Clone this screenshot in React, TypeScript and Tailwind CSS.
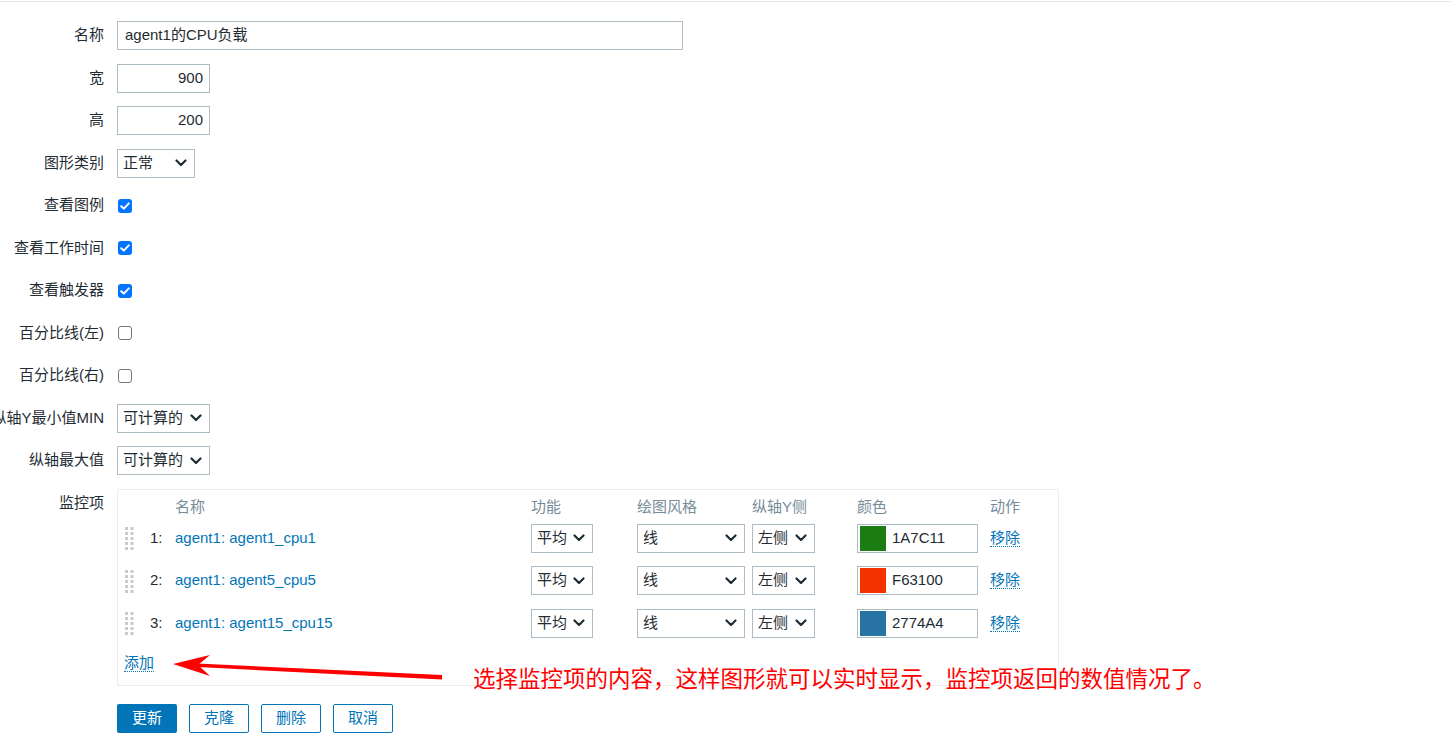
import React from 'react';

const font = { fontFamily: '"Liberation Sans", Arial, "Noto Sans CJK SC", sans-serif' };

const Chevron: React.FC = () => (
  <svg width="12" height="8" viewBox="0 0 12 8" className="shrink-0">
    <path d="M1.5 1.5 L6 6 L10.5 1.5" fill="none" stroke="#1f2c33" strokeWidth="2.2" strokeLinecap="round" strokeLinejoin="round" />
  </svg>
);

const Select: React.FC<{ value: string; w: string }> = ({ value, w }) => (
  <div className={`${w} h-[29px] border border-[#acbbc4] bg-white flex items-center justify-between pl-[5px] pr-[7px] text-[#1f2c33]`}>
    <span className="whitespace-nowrap">{value}</span>
    <Chevron />
  </div>
);

const Checkbox: React.FC<{ checked?: boolean }> = ({ checked }) =>
  checked ? (
    <div className="w-[14px] h-[14px] ml-px rounded-[3px] bg-[#0075ff] flex items-center justify-center">
      <svg width="10" height="8" viewBox="0 0 10 8">
        <path d="M1.2 4.2 L3.8 6.6 L8.8 1.4" fill="none" stroke="white" strokeWidth="2" strokeLinecap="round" strokeLinejoin="round" />
      </svg>
    </div>
  ) : (
    <div className="w-[14px] h-[14px] ml-px rounded-[3px] border border-[#767676] bg-white" />
  );

const Row: React.FC<{ label: string; top?: boolean; children: React.ReactNode }> = ({ label, top, children }) => (
  <div className={`flex ${top ? 'items-start' : 'items-center'}`}>
    <div className="w-[104px] shrink-0 h-[29px] flex items-center justify-end">
      <span className="whitespace-nowrap shrink-0 text-[#1f2c33]">{label}</span>
    </div>
    <div className="ml-[13px] min-h-[29px] flex items-center">{children}</div>
  </div>
);

const DragHandle: React.FC = () => (
  <svg width="9" height="23" viewBox="0 0 9 23">
    {[0, 5, 10, 15, 20].map((y) => (
      <g key={y} fill="#c4ccd1">
        <rect x="0" y={y} width="3" height="3" />
        <rect x="5.5" y={y} width="3" height="3" />
      </g>
    ))}
  </svg>
);

const items = [
  { n: 1, name: 'agent1: agent1_cpu1', color: '#1A7C11', hex: '1A7C11' },
  { n: 2, name: 'agent1: agent5_cpu5', color: '#F63100', hex: 'F63100' },
  { n: 3, name: 'agent1: agent15_cpu15', color: '#2774A4', hex: '2774A4' },
];

const cols = 'grid grid-cols-[26px_25px_356px_106px_115px_105px_133px_1fr]';

const App: React.FC = () => {
  return (
    <div className="relative w-[1452px] h-[741px] overflow-hidden bg-white text-[15px]" style={font}>
      <div className="pt-px">
        <div className="border-t border-[#e6e6e6] w-[1451px]" />
      </div>

      {/* Form */}
      <div className="pt-[19px] flex flex-col gap-[13.5px]">
        <Row label="名称">
          <div className="w-[566px] h-[29px] border border-[#acbbc4] flex items-center pl-[7px] text-[#1f2c33]">agent1的CPU负载</div>
        </Row>
        <Row label="宽">
          <div className="w-[93px] h-[29px] border border-[#acbbc4] flex items-center justify-end pr-[6px] text-[#1f2c33]">900</div>
        </Row>
        <Row label="高">
          <div className="w-[93px] h-[29px] border border-[#acbbc4] flex items-center justify-end pr-[6px] text-[#1f2c33]">200</div>
        </Row>
        <Row label="图形类别">
          <Select value="正常" w="w-[78px]" />
        </Row>
        <Row label="查看图例">
          <Checkbox checked />
        </Row>
        <Row label="查看工作时间">
          <Checkbox checked />
        </Row>
        <Row label="查看触发器">
          <Checkbox checked />
        </Row>
        <Row label="百分比线(左)">
          <Checkbox />
        </Row>
        <Row label="百分比线(右)">
          <Checkbox />
        </Row>
        <Row label="纵轴Y最小值MIN">
          <Select value="可计算的" w="w-[93px]" />
        </Row>
        <Row label="纵轴最大值">
          <Select value="可计算的" w="w-[93px]" />
        </Row>
        <Row label="监控项" top>
          <div className="w-[942px] h-[197px] border border-[#ebeef0] pl-[6px] pt-[6px]">
            <div className={`${cols} h-[18px] items-center text-[#768d99]`}>
              <div />
              <div />
              <div>名称</div>
              <div>功能</div>
              <div>绘图风格</div>
              <div>纵轴Y侧</div>
              <div>颜色</div>
              <div>动作</div>
            </div>
            <div className="mt-[10px] flex flex-col gap-[13.5px]">
              {items.map((it) => (
                <div key={it.n} className={`${cols} h-[29px] items-center`}>
                  <div className="pl-px pt-px">
                    <DragHandle />
                  </div>
                  <div className="text-[#1f2c33]">{it.n}:</div>
                  <div className="text-[#0275b8] whitespace-nowrap">{it.name}</div>
                  <div>
                    <Select value="平均" w="w-[62px]" />
                  </div>
                  <div>
                    <Select value="线" w="w-[108px]" />
                  </div>
                  <div>
                    <Select value="左侧" w="w-[63px]" />
                  </div>
                  <div>
                    <div className="w-[121px] h-[29px] border border-[#acbbc4] flex items-center pl-[2px]">
                      <div className="w-[26px] h-[25px]" style={{ backgroundColor: it.color }} />
                      <span className="ml-[6px] text-[#1f2c33]">{it.hex}</span>
                    </div>
                  </div>
                  <div>
                    <span className="text-[#0275b8] border-b border-dotted border-[#0275b8] leading-[17px] inline-block">移除</span>
                  </div>
                </div>
              ))}
            </div>
            <div className="mt-[16px] h-[18px] flex items-center">
              <span className="text-[#0275b8] border-b border-dotted border-[#0275b8] leading-[17px] inline-block">添加</span>
            </div>
          </div>
        </Row>
      </div>

      {/* Buttons */}
      <div className="mt-[18px] pl-[117px] flex gap-[12px]">
        <button className="w-[60px] h-[29px] rounded-[2px] bg-[#0275b8] text-white">更新</button>
        <button className="w-[60px] h-[29px] rounded-[2px] border border-[#0275b8] text-[#0275b8] bg-white">克隆</button>
        <button className="w-[60px] h-[29px] rounded-[2px] border border-[#0275b8] text-[#0275b8] bg-white">删除</button>
        <button className="w-[60px] h-[29px] rounded-[2px] border border-[#0275b8] text-[#0275b8] bg-white">取消</button>
      </div>

      {/* Annotation */}
      <svg className="absolute left-0 top-0 pointer-events-none" width="1452" height="741">
        <path d="M197 663.5 L442 675 L442 679.5 L197 667 Z" fill="#ff0000" />
        <path d="M173 664 L210 655 L198 665 L210 676 Z" fill="#ff0000" />
      </svg>
      <div
        className="absolute left-[473px] top-[663px] text-[22.5px] leading-[28px] text-[#ff0000] whitespace-nowrap"
        style={{ fontFamily: '"Noto Sans CJK SC", sans-serif' }}
      >
        选择监控项的内容，这样图形就可以实时显示，监控项返回的数值情况了。
      </div>
    </div>
  );
};

export default App;
